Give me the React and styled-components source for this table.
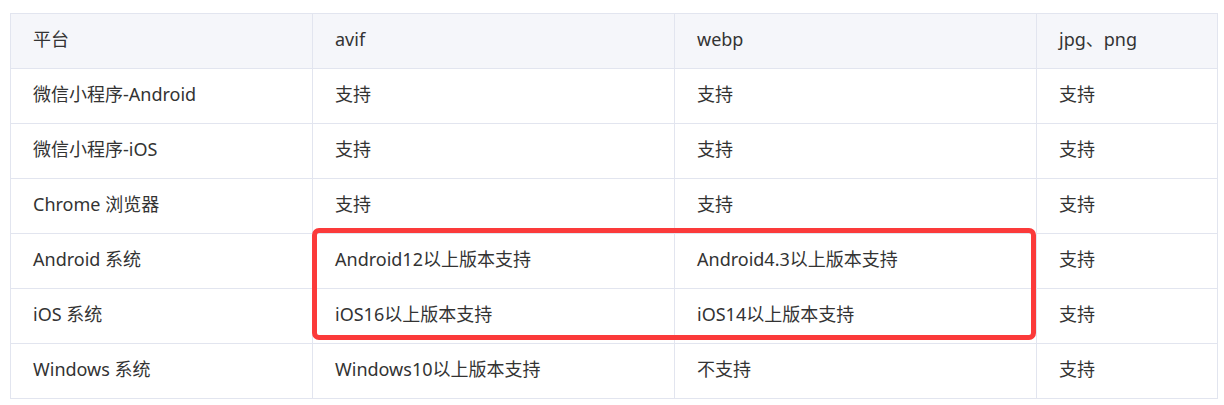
import React from "react";
import styled, { createGlobalStyle } from "styled-components";

const Global = createGlobalStyle`
  html, body { margin: 0; padding: 0; background: #ffffff; }
  body { font-family: "Noto Sans", "Noto Sans CJK SC", sans-serif; }
`;

const Page = styled.div`
  padding: 13px 7px 0 10px;
`;

const Frame = styled.div`
  position: relative;
  width: 1207px;
`;

const Table = styled.table`
  width: 1207px;
  border-collapse: collapse;
  table-layout: fixed;
  color: #333333;
  font-size: 18px;
`;

const Cell = styled.td`
  height: 50px;
  padding: 0 0 4px 22px;
  border: 1px solid #e2e5ef;
  vertical-align: middle;
  text-align: left;
  font-weight: 400;
  line-height: 24px;
  white-space: nowrap;
  background: ${(p) => (p.$head ? "#f5f6fa" : "#ffffff")};
`;

const Highlight = styled.div`
  position: absolute;
  left: 302px;
  top: 215px;
  width: 724px;
  height: 112px;
  box-sizing: border-box;
  border: 5px solid #fb3a3a;
  border-radius: 7px;
  pointer-events: none;
`;

const widths = [302, 362, 362, 181];

const header = ["平台", "avif", "webp", "jpg、png"];
const rows = [
  ["微信小程序-Android", "支持", "支持", "支持"],
  ["微信小程序-iOS", "支持", "支持", "支持"],
  ["Chrome 浏览器", "支持", "支持", "支持"],
  ["Android 系统", "Android12以上版本支持", "Android4.3以上版本支持", "支持"],
  ["iOS 系统", "iOS16以上版本支持", "iOS14以上版本支持", "支持"],
  ["Windows 系统", "Windows10以上版本支持", "不支持", "支持"],
];

export default function App() {
  return (
    <Page>
      <Global />
      <Frame>
        <Table>
          <colgroup>
            {widths.map((w, i) => (
              <col key={i} style={{ width: w }} />
            ))}
          </colgroup>
          <thead>
            <tr>
              {header.map((h) => (
                <Cell as="th" $head key={h}>
                  {h}
                </Cell>
              ))}
            </tr>
          </thead>
          <tbody>
            {rows.map((r, i) => (
              <tr key={i}>
                {r.map((c, j) => (
                  <Cell key={j}>{c}</Cell>
                ))}
              </tr>
            ))}
          </tbody>
        </Table>
        <Highlight />
      </Frame>
    </Page>
  );
}
